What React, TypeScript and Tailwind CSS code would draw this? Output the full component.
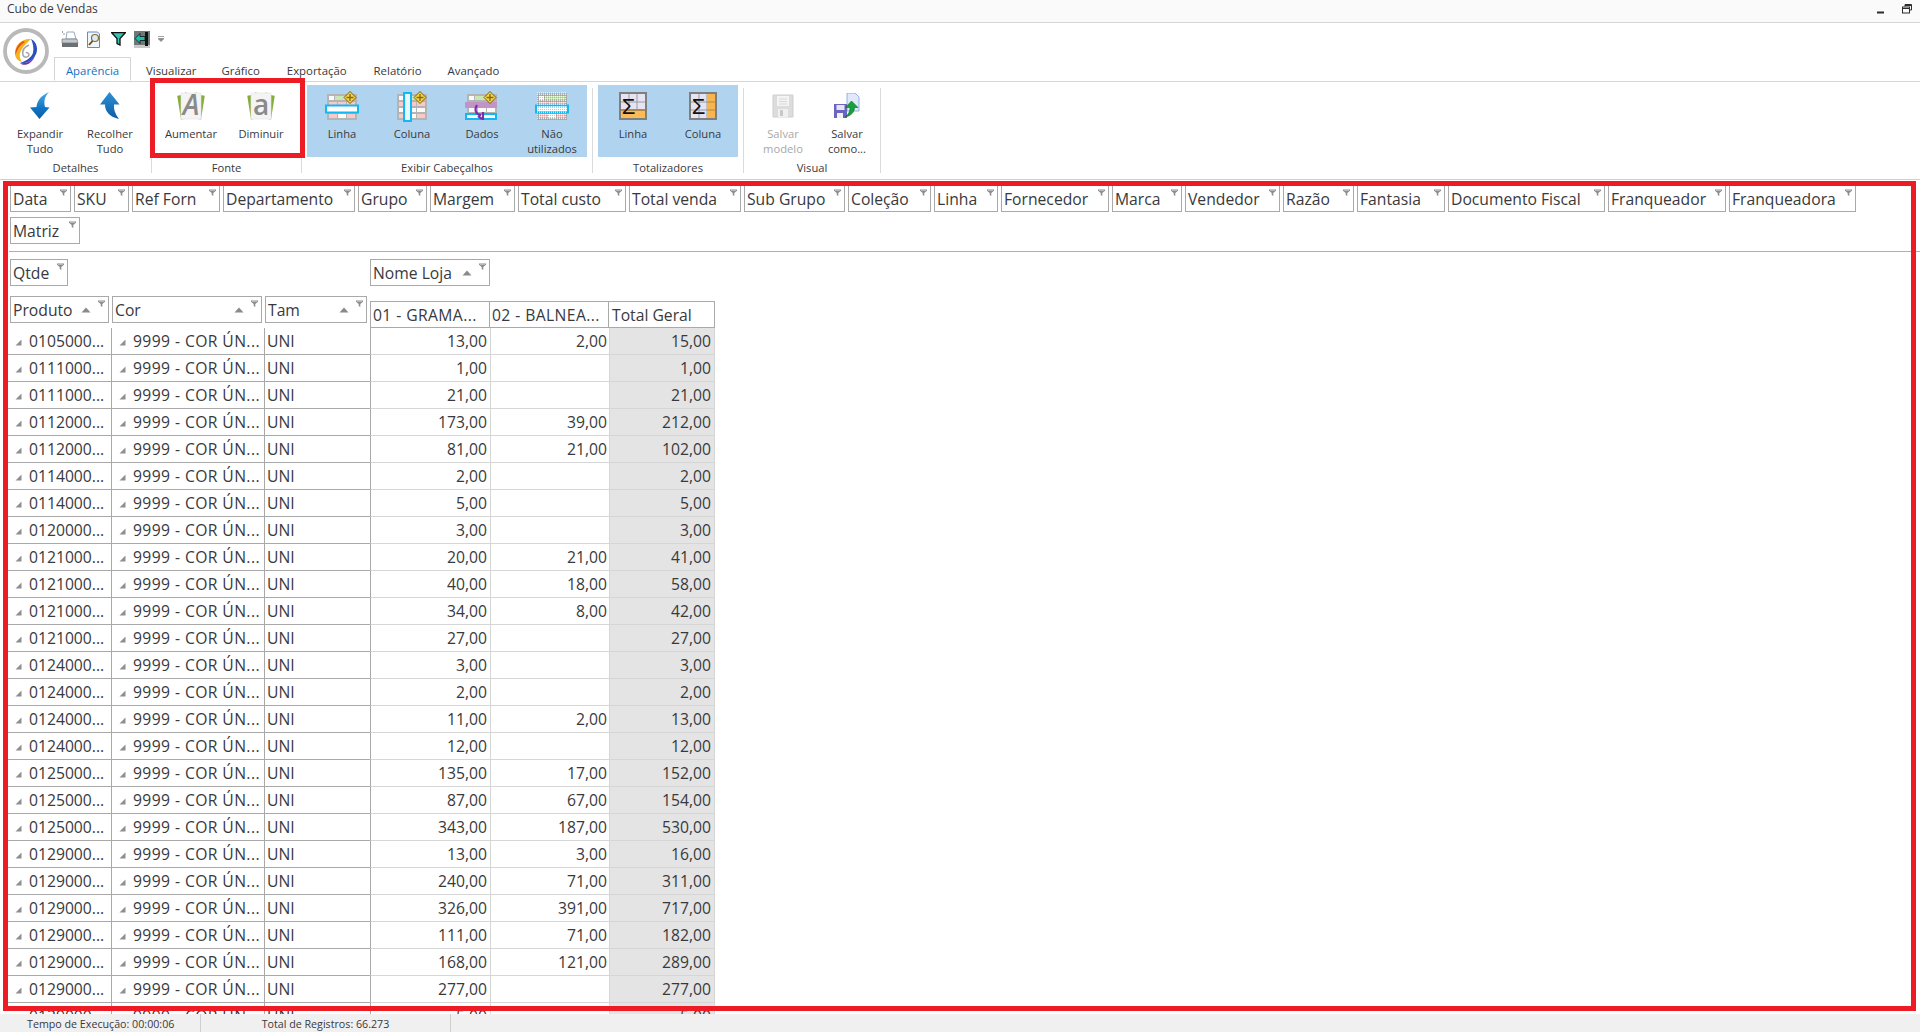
import type { ReactNode } from 'react';

const FIELDS: [string, string][] = [
  ['Data', 'w-[61px]'],
  ['SKU', 'w-[55px]'],
  ['Ref Forn', 'w-[88px]'],
  ['Departamento', 'w-[132px]'],
  ['Grupo', 'w-[69px]'],
  ['Margem', 'w-[85px]'],
  ['Total custo', 'w-[108px]'],
  ['Total venda', 'w-[112px]'],
  ['Sub Grupo', 'w-[101px]'],
  ['Coleção', 'w-[83px]'],
  ['Linha', 'w-[64px]'],
  ['Fornecedor', 'w-[108px]'],
  ['Marca', 'w-[70px]'],
  ['Vendedor', 'w-[95px]'],
  ['Razão', 'w-[71px]'],
  ['Fantasia', 'w-[88px]'],
  ['Documento Fiscal', 'w-[157px]'],
  ['Franqueador', 'w-[118px]'],
  ['Franqueadora', 'w-[127px]'],
  ['Matriz', 'w-[70px]'],
];

const ROWS: [string, string, string, string][] = [
  ['0105000...', '13,00', '2,00', '15,00'],
  ['0111000...', '1,00', '', '1,00'],
  ['0111000...', '21,00', '', '21,00'],
  ['0112000...', '173,00', '39,00', '212,00'],
  ['0112000...', '81,00', '21,00', '102,00'],
  ['0114000...', '2,00', '', '2,00'],
  ['0114000...', '5,00', '', '5,00'],
  ['0120000...', '3,00', '', '3,00'],
  ['0121000...', '20,00', '21,00', '41,00'],
  ['0121000...', '40,00', '18,00', '58,00'],
  ['0121000...', '34,00', '8,00', '42,00'],
  ['0121000...', '27,00', '', '27,00'],
  ['0124000...', '3,00', '', '3,00'],
  ['0124000...', '2,00', '', '2,00'],
  ['0124000...', '11,00', '2,00', '13,00'],
  ['0124000...', '12,00', '', '12,00'],
  ['0125000...', '135,00', '17,00', '152,00'],
  ['0125000...', '87,00', '67,00', '154,00'],
  ['0125000...', '343,00', '187,00', '530,00'],
  ['0129000...', '13,00', '3,00', '16,00'],
  ['0129000...', '240,00', '71,00', '311,00'],
  ['0129000...', '326,00', '391,00', '717,00'],
  ['0129000...', '111,00', '71,00', '182,00'],
  ['0129000...', '168,00', '121,00', '289,00'],
  ['0129000...', '277,00', '', '277,00'],
  ['0129000...', '5,00', '', '5,00'],
];

function Funnel() {
  return (
    <svg width="7" height="7" viewBox="0 0 7 7" className="absolute right-[3px] top-[3px]">
      <path d="M0 0.5h7v1.2L4.3 4v3L2.7 6V4L0 1.7z" fill="#8c8c8c" />
      <rect x="1" y="0.9" width="5" height="0.7" fill="#d8d8d8" />
    </svg>
  );
}

function SortUp() {
  return (
    <svg width="10" height="6" viewBox="0 0 10 6" className="shrink-0">
      <path d="M5 0.5L9.5 5.5H0.5z" fill="#8a8a8a" />
    </svg>
  );
}

function Expander() {
  return (
    <svg width="7" height="7" viewBox="0 0 7 7" className="shrink-0">
      <path d="M6.5 0.5V6.5H0.5z" fill="#8f8f8f" />
    </svg>
  );
}

function Chip({ label, width, sortGap }: { label: string; width: string; sortGap?: string }) {
  return (
    <div className={`relative flex items-center h-[27px] shrink-0 border border-[#a9a9a9] pl-[2px] ${width}`}>
      <span className="pt-[2px] whitespace-nowrap">{label}</span>
      {sortGap && <span className={`ml-auto ${sortGap}`}><SortUp /></span>}
      <Funnel />
    </div>
  );
}

function GridBase({ children, noisy }: { children?: ReactNode; noisy?: boolean }) {
  return (
    <svg width="34" height="32" viewBox="0 0 34 32">
      <defs>
        <pattern id="noise" width="2" height="2" patternUnits="userSpaceOnUse">
          <rect x="0" y="0" width="1" height="1" fill="#ffffff" opacity="0.7" />
          <rect x="1" y="1" width="1" height="1" fill="#8b8b8b" opacity="0.5" />
        </pattern>
      </defs>
      <rect x="2" y="4" width="30" height="26" fill="#b4b4b4" />
      <rect x="4" y="6" width="5" height="4" fill="#fafafa" />
      <rect x="10" y="6" width="20" height="4" fill="#c9e6b4" />
      <rect x="4" y="12" width="8" height="4" fill="#f8c9c9" />
      <rect x="13" y="12" width="8" height="4" fill="#f8c9c9" />
      <rect x="22" y="12" width="8" height="4" fill="#f8c9c9" />
      <rect x="4" y="18" width="8" height="4" fill="#fafafa" />
      <rect x="13" y="18" width="8" height="4" fill="#fafafa" />
      <rect x="22" y="18" width="8" height="4" fill="#fafafa" />
      <rect x="4" y="24" width="8" height="4" fill="#f8c9c9" />
      <rect x="13" y="24" width="8" height="4" fill="#fafafa" />
      <rect x="22" y="24" width="8" height="4" fill="#f8c9c9" />
      {children}
      {!noisy && (
        <g>
          <path d="M25 1.5L31 7.5L25 13.5L19 7.5z" fill="#f6d640" stroke="#7a5a10" strokeWidth="1" />
          <path d="M25 4v7M21.5 7.5h7" stroke="#8a6a14" strokeWidth="1.4" />
        </g>
      )}
      {noisy && <rect x="2" y="2" width="30" height="28" fill="url(#noise)" />}
    </svg>
  );
}

function SigmaIcon({ column }: { column?: boolean }) {
  return (
    <svg width="30" height="30" viewBox="0 0 30 30" className="overflow-visible">
      <rect x="1" y="1" width="28" height="28" fill="#7f7f7f" />
      <rect x="3" y="3" width="24" height="24" fill="#e6e4f4" />
      <path d="M11 3v24M19 3v24M3 11h24M3 19h24" stroke="#9c9c9c" strokeWidth="1" />
      {column ? (
        <g>
          <rect x="19" y="3" width="8" height="24" fill="#f6b54e" />
          <path d="M19 11h8M19 19h8" stroke="#b78a3c" strokeWidth="1" />
        </g>
      ) : (
        <g>
          <rect x="3" y="19" width="24" height="8" fill="#fbbc58" />
          <rect x="3" y="18" width="24" height="2" fill="#b58a3e" />
        </g>
      )}
      <text x="10.500" y="23" textAnchor="middle" fontSize="22" fill="#111" fontFamily="'Liberation Sans'">Σ</text>
    </svg>
  );
}

function PageLetter({ letter, italic }: { letter: string; italic?: boolean }) {
  return (
    <svg width="28" height="30" viewBox="0 0 28 30" className="overflow-visible">
      <rect x="2" y="3" width="20" height="24" fill="#86ad3c" transform="rotate(-9 12 15)" />
      <rect x="6" y="3" width="20" height="24" fill="#86ad3c" transform="rotate(9 16 15)" />
      <rect x="4" y="2" width="20" height="26" fill="#f4f4f4" stroke="#e4e4e4" strokeWidth="0.6" />
      <text x="14" y="24" textAnchor="middle" fontSize="28" fontWeight="600" fontStyle={italic ? 'italic' : 'normal'} fill="#8a8a8a" fontFamily="'Open Sans'">{letter}</text>
    </svg>
  );
}

function ArrowDown() {
  return (
    <svg width="20" height="28" viewBox="0 0 20 28">
      <defs>
        <linearGradient id="arrowBlue" x1="0" y1="0" x2="0" y2="1">
          <stop offset="0" stopColor="#52a9e3" />
          <stop offset="0.6" stopColor="#0f74c4" />
          <stop offset="1" stopColor="#0a5ea6" />
        </linearGradient>
      </defs>
      <path d="M19 0C12 3 7 8 6.5 15L0 15.5L9.5 27L19.5 15.5L15 15C13.5 9 15 4 19 0Z" fill="url(#arrowBlue)" />
    </svg>
  );
}

function ArrowUp() {
  return (
    <svg width="20" height="28" viewBox="0 0 20 28">
      <defs>
        <linearGradient id="arrowBlue2" x1="0" y1="0" x2="0" y2="1">
          <stop offset="0" stopColor="#2f8fd6" />
          <stop offset="1" stopColor="#0a5ea6" />
        </linearGradient>
      </defs>
      <path d="M9.5 0L0 12.5L5 12.5C5 20 10 25 19 27C15 22 13.5 17 14 12.5L19.5 12.5Z" fill="url(#arrowBlue2)" />
    </svg>
  );
}

function Floppy() {
  return (
    <svg width="24" height="26" viewBox="0 0 24 26">
      <path d="M2 2h20v22H2z" fill="#dcdcdc" stroke="#cfcfcf" />
      <rect x="6" y="3" width="12" height="10" fill="#f4f4f4" />
      <path d="M8 6h8M8 8.5h8M8 11h8" stroke="#d8d8d8" />
      <rect x="7" y="16" width="10" height="8" fill="#f0f0f0" />
      <rect x="9" y="17" width="3" height="6" fill="#c8c8c8" />
    </svg>
  );
}

function SaveAs() {
  return (
    <svg width="26" height="26" viewBox="0 0 26 26">
      <path d="M13 0h8l4 4v14H13z" fill="#dfe9fb" stroke="#7f9fd8" strokeWidth="0.8" />
      <path d="M0 11h13v14H0z" fill="#6a66c0" />
      <rect x="2.5" y="12" width="8" height="5" fill="#e4e4f4" />
      <rect x="3" y="20" width="6" height="5" fill="#f2f2f2" />
      <path d="M17.5 8L24 14.5H20.5C20.5 19 17 23 11 24C15 21 16 18 16 14.5H11.5z" fill="#16a23a" stroke="#0d6a24" strokeWidth="0.6" />
    </svg>
  );
}

function Logo() {
  return (
    <svg width="46" height="46" viewBox="0 0 46 46" className="shrink-0">
      <circle cx="23" cy="23" r="21" fill="#ffffff" stroke="#b9b9b9" strokeWidth="3.800" />
      <path d="M28 11C19 10 12 17 12 25C12 30 15 33 19 34C16 30 16 25 19 21C21 17 25 14 28 11Z" fill="#f6b21e" />
      <path d="M20 13C15 16 12 21 12.5 27C14 22 17 17 22 14Z" fill="#e8501e" />
      <path d="M28 11C34 14 36 22 32 28C29 33 23 36 17 35C23 33 28 30 30 25C31 20 30 15 28 11Z" fill="#2a4fc0" />
      <path d="M17 35C23 36 29 33 32 28C30 34 24 38 19 36.500Z" fill="#7a2fa8" />
      <path d="M26 17C21 19 19 23 20 27C21 30 25 30 26 27C26 25 24 24 23 25" fill="none" stroke="#a8a8a8" strokeWidth="1.6" />
    </svg>
  );
}

function Printer() {
  return (
    <svg width="18" height="17" viewBox="0 0 18 17">
      <path d="M6 1h7l2 7H5z" fill="#ffffff" stroke="#7d97b8" strokeWidth="0.8" />
      <path d="M1 8h15l1 4H1z" fill="#c4c8cc" stroke="#6a6a6a" strokeWidth="0.6" />
      <path d="M1 12h16v4H1z" fill="#6b7074" />
      <path d="M1 1h1M2.500 3h1" stroke="#333" />
    </svg>
  );
}

function Preview() {
  return (
    <svg width="15" height="17" viewBox="0 0 15 17">
      <path d="M0.500 1h10l2 2v13.500H0.500z" fill="#f0f5fc" stroke="#5f8dc6" />
      <circle cx="8" cy="7" r="3.500" fill="#d8ecf8" stroke="#8a6a30" strokeWidth="1.2" />
      <path d="M5.500 10L2 14" stroke="#6b4a1a" strokeWidth="1.8" />
    </svg>
  );
}

function TealFunnel() {
  return (
    <svg width="15" height="14" viewBox="0 0 15 14">
      <path d="M0.700 0.700h13.600L9 6.500v6.500l-3-1.500v-5z" fill="#36c4b4" stroke="#111" strokeWidth="1.3" />
    </svg>
  );
}

function ExitIcon() {
  return (
    <svg width="16" height="17" viewBox="0 0 16 17">
      <rect x="0" y="0" width="16" height="14" fill="#6f7878" />
      <rect x="0" y="14" width="16" height="3" fill="#c8c8c8" />
      <rect x="11" y="1" width="3" height="14" fill="#111" />
      <path d="M1 7.500l5-5v3h5v4H6v3z" stroke="#111" strokeWidth="0.8" fill="#19c0b0" />
    </svg>
  );
}

function RibbonButton({ icon, label, width = 'w-[70px]', disabled }: { icon: ReactNode; label: ReactNode; width?: string; disabled?: boolean }) {
  return (
    <div className={`flex flex-col items-center pt-[5px] ${width}`}>
      <div className="flex h-[32px] items-center justify-center">{icon}</div>
      <div className={`mt-[4px] text-center leading-[15px] ${disabled ? 'text-[#a8a8a8]' : ''}`}>{label}</div>
    </div>
  );
}

function RibbonGroup({ title, width, children }: { title: string; width: string; children: ReactNode }) {
  return (
    <div className={`flex flex-col pt-[3px] ${width}`}>
      {children}
      <div className="mt-[3px] h-[15px] text-center leading-[15px]">{title}</div>
    </div>
  );
}

function GroupSep() {
  return <div className="my-[6px] w-px shrink-0 bg-[#dadada]" />;
}

export default function App() {
  return (
    <div className="relative flex h-[1032px] w-[1920px] flex-col overflow-hidden bg-white font-['Open_Sans'] text-[#38393d]">
      {/* Title bar */}
      <div className="flex h-[23px] shrink-0 items-start justify-between border-b border-[#d6d6d6] bg-[#fafafa] pl-[7px] pr-[8px]">
        <span className="text-[12px] leading-[17px]">Cubo de Vendas</span>
        <div className="flex items-start gap-[18px] pt-[4px]">
          <svg width="7" height="9" viewBox="0 0 7 9" className="mt-px"><rect x="0" y="6.500" width="7" height="2" fill="#2b2b2b" /></svg>
          <svg width="10" height="10" viewBox="0 0 10 10" fill="none" stroke="#2b2b2b" strokeWidth="1">
            <path d="M3 2.500V0.500H9.500V6H7.500" />
            <rect x="0.500" y="3" width="7" height="6" />
            <path d="M0.500 4.500H7.500M3 1.500H9.500" />
          </svg>
        </div>
      </div>

      {/* Quick access + tabs */}
      <div className="flex h-[59px] shrink-0 border-b border-[#d6d6d6]">
        <div className="w-[54px] shrink-0 pl-[3px] pt-[5px]">
          <Logo />
        </div>
        <div className="flex flex-1 flex-col">
          <div className="flex h-[35px] items-center pb-[2px] pl-[7px]">
            <Printer />
            <span className="w-[8px]" />
            <Preview />
            <span className="w-[9px]" />
            <TealFunnel />
            <span className="w-[8px]" />
            <ExitIcon />
            <svg width="6" height="6" viewBox="0 0 6 6" className="ml-[8px]">
              <path d="M0 0.500h6M0 2.500h6L3 5.500z" stroke="#8a8a8a" strokeWidth="0.8" fill="#8a8a8a" />
            </svg>
          </div>
          <div className="flex h-[24px] text-[11.4px] leading-[24px]">
            <div className="z-10 flex h-[24px] w-[77px] items-center justify-center border border-b-white border-[#d6d6d6] bg-white pt-[4px] text-[#0f73c4]">Aparência</div>
            <span className="ml-[15px] mt-[2px]">Visualizar</span>
            <span className="ml-[25px] mt-[2px]">Gráfico</span>
            <span className="ml-[27px] mt-[2px]">Exportação</span>
            <span className="ml-[27px] mt-[2px]">Relatório</span>
            <span className="ml-[26px] mt-[2px]">Avançado</span>
          </div>
        </div>
      </div>

      {/* Ribbon */}
      <div className="flex h-[98px] shrink-0 border-b border-[#d0d0d0] text-[11.2px]">
        <RibbonGroup title="Detalhes" width="w-[151px]">
          <div className="flex h-[72px] pl-[5px]">
            <RibbonButton icon={<ArrowDown />} label={<>Expandir<br />Tudo</>} />
            <RibbonButton icon={<ArrowUp />} label={<>Recolher<br />Tudo</>} />
          </div>
        </RibbonGroup>
        <GroupSep />
        <RibbonGroup title="Fonte" width="w-[149px]">
          <div className="flex h-[72px] pl-[4px]">
            <RibbonButton icon={<PageLetter letter="A" italic />} label="Aumentar" />
            <RibbonButton icon={<PageLetter letter="a" />} label="Diminuir" />
          </div>
        </RibbonGroup>
        <GroupSep />
        <RibbonGroup title="Exibir Cabeçalhos" width="w-[290px]">
          <div className="mx-[5px] flex h-[72px] bg-[#b0d4ef]">
            <RibbonButton
              icon={<GridBase><rect x="1" y="15.500" width="32" height="7" fill="#ffffff" stroke="#12b8f2" strokeWidth="2" /></GridBase>}
              label="Linha"
            />
            <RibbonButton
              icon={<GridBase><rect x="9" y="3" width="7" height="28" fill="#e8f6fd" stroke="#12b8f2" strokeWidth="2" /></GridBase>}
              label="Coluna"
            />
            <RibbonButton
              icon={
                <GridBase>
                  <rect x="0" y="12" width="32" height="6" fill="#c194c8" />
                  <rect x="1" y="24" width="30" height="5" fill="#ffffff" stroke="#12b8f2" strokeWidth="2" />
                  <path d="M12 15C9 20 11 25 16 25M13 26l4 3M18 22v8" stroke="#7b2fb0" strokeWidth="2.200" fill="none" />
                </GridBase>
              }
              label="Dados"
            />
            <RibbonButton
              icon={<GridBase noisy><rect x="1" y="15.500" width="32" height="7" fill="#ffffff" stroke="#12b8f2" strokeWidth="2" /></GridBase>}
              label={<>Não<br />utilizados</>}
            />
          </div>
        </RibbonGroup>
        <GroupSep />
        <RibbonGroup title="Totalizadores" width="w-[150px]">
          <div className="mx-[5px] flex h-[72px] bg-[#b0d4ef]">
            <RibbonButton icon={<SigmaIcon />} label="Linha" />
            <RibbonButton icon={<SigmaIcon column />} label="Coluna" />
          </div>
        </RibbonGroup>
        <GroupSep />
        <RibbonGroup title="Visual" width="w-[136px]">
          <div className="flex h-[72px] pl-[7px]">
            <RibbonButton icon={<Floppy />} label={<>Salvar<br />modelo</>} width="w-[64px]" disabled />
            <RibbonButton icon={<SaveAs />} label={<>Salvar<br />como...</>} width="w-[64px]" />
          </div>
        </RibbonGroup>
        <GroupSep />
      </div>

      {/* Pivot grid */}
      <div className="min-h-0 flex-1 overflow-hidden text-[15.7px]">
        <div className="ml-[9px] flex flex-wrap gap-x-[3px] gap-y-[5px] border-b border-[#b0b0b0] pb-[7px] pl-px pt-[5px]">
          {FIELDS.map(([label, width]) => (
            <Chip key={label} label={label} width={width} />
          ))}
          <div className="w-[60px]" />
        </div>

        <div className="flex pl-[10px] pt-[7px]">
          <div className="w-[360px]">
            <Chip label="Qtde" width="w-[58px]" />
          </div>
          <Chip label="Nome Loja" width="w-[120px]" sortGap="mr-[17px]" />
        </div>

        <div className="flex h-[42px] pl-[10px] pt-[10px]">
          <div className="flex w-[360px] gap-[3px]">
            <Chip label="Produto" width="w-[99px]" sortGap="mr-[17px]" />
            <Chip label="Cor" width="w-[150px]" sortGap="mr-[17px]" />
            <Chip label="Tam" width="w-[102px]" sortGap="mr-[17px]" />
          </div>
          <div className="mt-[5px] flex h-[27px] border border-[#a9a9a9]">
            <div className="flex w-[119px] items-center border-r border-[#a9a9a9] pl-[2px] pt-[2px] tracking-[0.4px] whitespace-nowrap">01 - GRAMA...</div>
            <div className="flex w-[119px] items-center border-r border-[#a9a9a9] pl-[2px] pt-[2px] tracking-[0.4px] whitespace-nowrap">02 - BALNEA...</div>
            <div className="flex w-[105px] items-center pl-[3px] pt-[2px] whitespace-nowrap">Total Geral</div>
          </div>
        </div>

        <div className="ml-[8px]">
          {ROWS.map(([prod, a, b, total], i) => (
            <div key={i} className="flex h-[27px]">
              <div className="flex w-[103px] items-center border-b border-[#a9a9a9] pl-[7px] pt-[2px]">
                <Expander />
                <span className="ml-[7px] whitespace-nowrap">{prod}</span>
              </div>
              <div className="flex w-[153px] items-center border-b border-l border-[#a9a9a9] pl-[7px] pt-[2px]">
                <Expander />
                <span className="ml-[7px] tracking-[0.4px] whitespace-nowrap">9999 - COR ÚN...</span>
              </div>
              <div className="flex w-[106px] items-center border-b border-l border-[#a9a9a9] pl-[2px] pt-[2px]">UNI</div>
              <div className="flex w-[120px] items-center justify-end border-b border-l border-b-[#d6d6d6] border-l-[#a9a9a9] pr-[3px] pt-[2px]">{a}</div>
              <div className="flex w-[119px] items-center justify-end border-b border-l border-[#d6d6d6] pr-[2px] pt-[2px]">{b}</div>
              <div className="flex w-[106px] items-center justify-end border-b border-l border-r border-[#d6d6d6] bg-[#e4e4e4] pr-[3px] pt-[2px]">{total}</div>
            </div>
          ))}
        </div>
      </div>

      {/* Status bar */}
      <div className="flex h-[18px] shrink-0 bg-[#f0f0f0] text-[10.7px] leading-[20px]">
        <div className="h-full w-[201px] border-r border-[#cfcfcf] pl-[27px] whitespace-nowrap">Tempo de Execução: 00:00:06</div>
        <div className="h-full w-[250px] border-r border-[#cfcfcf] text-center whitespace-nowrap">Total de Registros: 66.273</div>
      </div>

      {/* Red annotation boxes over the screenshot */}
      <div className="pointer-events-none absolute left-[150px] top-[78px] h-[80px] w-[155px] border-[5px] border-[#ed1c24]" />
      <div className="pointer-events-none absolute left-[3px] top-[181px] h-[830px] w-[1913px] border-[5px] border-[#ed1c24]" />
    </div>
  );
}
